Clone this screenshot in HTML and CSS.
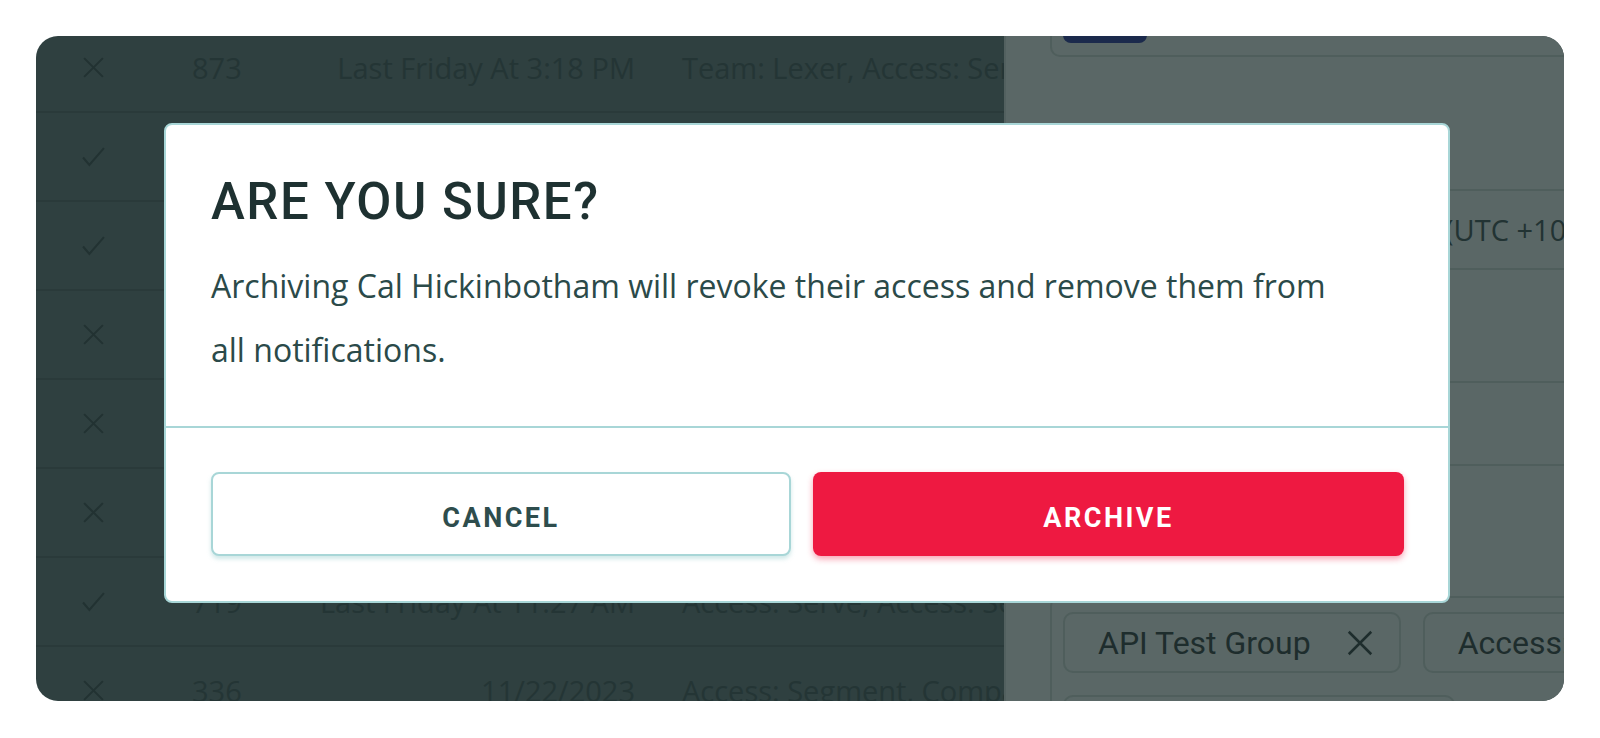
FILE: index.html
```html
<!DOCTYPE html>
<html>

<head>
    <meta name="viewport" content="width=device-width, initial-scale=1.0">
    <meta charset="utf-8" />
    <title>archive user</title>
    <link rel="stylesheet" href="styles.css">
</head>

<body>
    <div class="page">
        <div class="panel">
            <div class="table">
                <div class="row">
                    <div class="cell icon"><svg viewBox="0 0 24 24"><path d="M3 3 L21 21 M21 3 L3 21" /></svg></div>
                    <div class="cell num">873</div>
                    <div class="cell date">Last Friday At 3:18 PM</div>
                    <div class="cell groups">Team: Lexer, Access: Serve</div>
                </div>
                <div class="row">
                    <div class="cell icon"><svg viewBox="0 0 24 24"><path d="M2 13 L8 20 L22 4" /></svg></div>
                    <div class="cell num">912</div>
                    <div class="cell date">Last Friday At 2:04 PM</div>
                    <div class="cell groups">Access: Serve, Team: Lexer</div>
                </div>
                <div class="row">
                    <div class="cell icon"><svg viewBox="0 0 24 24"><path d="M2 13 L8 20 L22 4" /></svg></div>
                    <div class="cell num">845</div>
                    <div class="cell date">Last Friday At 1:52 PM</div>
                    <div class="cell groups">Access: Segment, Compass</div>
                </div>
                <div class="row">
                    <div class="cell icon"><svg viewBox="0 0 24 24"><path d="M3 3 L21 21 M21 3 L3 21" /></svg></div>
                    <div class="cell num">802</div>
                    <div class="cell date">Last Friday At 1:10 PM</div>
                    <div class="cell groups">Team: Lexer</div>
                </div>
                <div class="row">
                    <div class="cell icon"><svg viewBox="0 0 24 24"><path d="M3 3 L21 21 M21 3 L3 21" /></svg></div>
                    <div class="cell num">788</div>
                    <div class="cell date">Last Friday At 12:45 PM</div>
                    <div class="cell groups">Access: Serve</div>
                </div>
                <div class="row">
                    <div class="cell icon"><svg viewBox="0 0 24 24"><path d="M3 3 L21 21 M21 3 L3 21" /></svg></div>
                    <div class="cell num">751</div>
                    <div class="cell date">Last Friday At 12:02 PM</div>
                    <div class="cell groups">Access: Segment</div>
                </div>
                <div class="row">
                    <div class="cell icon"><svg viewBox="0 0 24 24"><path d="M2 13 L8 20 L22 4" /></svg></div>
                    <div class="cell num">719</div>
                    <div class="cell date">Last Friday At 11:27 AM</div>
                    <div class="cell groups">Access: Serve, Access: Segment</div>
                </div>
                <div class="row">
                    <div class="cell icon"><svg viewBox="0 0 24 24"><path d="M3 3 L21 21 M21 3 L3 21" /></svg></div>
                    <div class="cell num">336</div>
                    <div class="cell date">11/22/2023</div>
                    <div class="cell groups">Access: Segment, Compass</div>
                </div>
            </div>

            <div class="sidebar">
                <div class="card-top">
                    <div class="navy-btn"></div>
                </div>
                <div class="field tz">
                    <span class="field-label">Timezone</span>
                    <span class="field-value">(UTC +10:00) Brisbane</span>
                </div>
                <div class="field"></div>
                <div class="chips">
                    <div class="chip">API Test Group <svg viewBox="0 0 24 24"><path d="M3 3 L21 21 M21 3 L3 21" /></svg></div>
                    <div class="chip">Access: Serve <svg viewBox="0 0 24 24"><path d="M3 3 L21 21 M21 3 L3 21" /></svg></div>
                    <div class="chip">Team: Lexer Group <svg viewBox="0 0 24 24"><path d="M3 3 L21 21 M21 3 L3 21" /></svg></div>
                    <div class="chip">Access: Segment <svg viewBox="0 0 24 24"><path d="M3 3 L21 21 M21 3 L3 21" /></svg></div>
                </div>
            </div>

            <!-- confirm dialog over the page -->
            <div class="dialog">
                <div class="dialog-body">
                    <h1>ARE YOU SURE?</h1>
                    <p>Archiving Cal Hickinbotham will revoke their access and remove them from all notifications.</p>
                </div>
                <div class="dialog-foot">
                    <button class="btn cancel">CANCEL</button>
                    <button class="btn archive">ARCHIVE</button>
                </div>
            </div>
        </div>
    </div>
</body>

</html>
```

FILE: styles.css
```css
body {
    margin: 0;
    padding: 0;
    background-color: #fff;
}

.page {
    padding: 36px 36px 37px 36px;
}

.panel {
    position: relative;
    height: 665px;
    border-radius: 22px;
    overflow: hidden;
    display: grid;
    grid-template-columns: 968px 1fr;
    background: #2f4040;
}

/* table behind the dialog */
.table {
    margin-top: -12px;
    font-family: "Open Sans", sans-serif;
    font-size: 29px;
    color: #243535;
}

.row {
    box-sizing: border-box;
    height: 89px;
    display: grid;
    grid-template-columns: 114px 140px 345px 1fr;
    align-items: center;
    border-bottom: 2px solid #2a3a3a;
    white-space: nowrap;
}

.cell {
    overflow: hidden;
}

.icon {
    display: flex;
    justify-content: center;
}

.icon svg {
    width: 25px;
    height: 25px;
    fill: none;
    stroke: #223232;
    stroke-width: 2;
}

.num {
    padding-left: 42px;
}

.date {
    text-align: right;
}

.groups {
    padding-left: 47px;
}

/* right side panel */
.sidebar {
    background: #5a6766;
    border-left: 2px solid #52605f;
    padding-left: 44px;
    overflow: hidden;
}

.card-top {
    box-sizing: border-box;
    width: 700px;
    height: 60px;
    margin-top: -39px;
    border: 2px solid #4f5e5c;
    border-top: none;
    border-radius: 0 0 0 10px;
    display: flex;
    align-items: flex-end;
    padding: 0 0 12px 11px;
}

.navy-btn {
    width: 84px;
    height: 40px;
    background: #1b2a4c;
    border-radius: 0 0 8px 8px;
}

.field {
    box-sizing: border-box;
    width: 700px;
    height: 85px;
    margin-top: 111px;
    border: 2px solid #4f5e5c;
    border-radius: 10px;
    display: flex;
    align-items: center;
    font-family: "Open Sans", sans-serif;
    font-size: 29px;
    color: #223333;
    white-space: nowrap;
}

.field.tz {
    height: 81px;
    margin-top: 132px;
}

.field-label {
    width: 371px;
    padding-left: 22px;
}

.chips {
    box-sizing: border-box;
    width: 700px;
    height: 200px;
    margin-top: 130px;
    border-top: 2px solid #4f5e5c;
    border-left: 2px solid #4f5e5c;
    border-radius: 10px 0 0 0;
    padding: 14px 0 0 11px;
    display: flex;
    flex-wrap: wrap;
    gap: 22px 22px;
    align-content: flex-start;
}

.chip {
    box-sizing: border-box;
    height: 61px;
    border: 2px solid #4f5e5c;
    border-radius: 10px;
    padding: 0 24px 0 33px;
    display: flex;
    align-items: center;
    gap: 34px;
    font-family: Roboto, sans-serif;
    font-size: 32px;
    color: #1e2d2d;
    white-space: nowrap;
}

.chip svg {
    width: 30px;
    height: 30px;
    fill: none;
    stroke: #1e2d2d;
    stroke-width: 2;
}

/* dialog */
.dialog {
    position: absolute;
    left: 128px;
    top: 87px;
    box-sizing: border-box;
    width: 1286px;
    background: #fff;
    border: 2px solid #a8d6d7;
    border-radius: 8px;
}

.dialog-body {
    padding: 47px 45px 44px 45px;
    border-bottom: 2px solid #a8d6d7;
}

.dialog-body h1 {
    margin: 0;
    font-family: Roboto, sans-serif;
    font-weight: 500;
    font-size: 51px;
    line-height: 60px;
    letter-spacing: 1.5px;
    color: #1e3131;
}

.dialog-body p {
    margin: 22px 0 0 0;
    max-width: 1150px;
    font-family: "Open Sans", sans-serif;
    font-size: 32px;
    line-height: 64px;
    color: #2b4a49;
}

.dialog-foot {
    padding: 44px 44px 45px 45px;
    display: grid;
    grid-template-columns: 580fr 591fr;
    gap: 22px;
}

.btn {
    height: 84px;
    padding-top: 8px;
    border-radius: 8px;
    font-family: Roboto, sans-serif;
    font-weight: 700;
    font-size: 27px;
    letter-spacing: 2.5px;
    cursor: pointer;
}

.cancel {
    background: #fff;
    border: 2px solid #a8d6d7;
    color: #2e4d4d;
    box-shadow: 0 3px 4px rgba(120, 190, 190, 0.35);
}

.archive {
    background: #ee1941;
    border: none;
    color: #fff;
    box-shadow: 0 3px 6px rgba(238, 25, 65, 0.4);
}
```
